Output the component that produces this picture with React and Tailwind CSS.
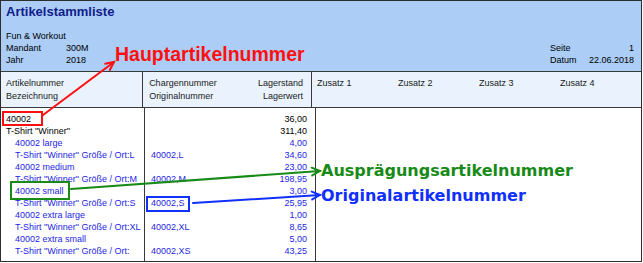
import React from "react";

const rows = [
  { nr: "40002", qty: "36,00", main: true },
  { nr: 'T-Shirt "Winner"', qty: "311,40", main: true },
  { nr: "40002 large", qty: "4,00" },
  { nr: 'T-Shirt "Winner" Größe / Ort:L', orig: "40002,L", qty: "34,60" },
  { nr: "40002 medium", qty: "23,00" },
  { nr: 'T-Shirt "Winner" Größe / Ort:M', orig: "40002,M", qty: "198,95" },
  { nr: "40002 small", qty: "3,00" },
  { nr: 'T-Shirt "Winner" Größe / Ort:S', orig: "40002,S", qty: "25,95" },
  { nr: "40002 extra large", qty: "1,00" },
  { nr: 'T-Shirt "Winner" Größe / Ort:XL', orig: "40002,XL", qty: "8,65" },
  { nr: "40002 extra small", qty: "5,00" },
  { nr: 'T-Shirt "Winner" Größe / Ort:', orig: "40002,XS", qty: "43,25" },
];

// open arrow head at (x2,y2)
const Arrow = ({ x1, y1, x2, y2, color }) => {
  const a = Math.atan2(y2 - y1, x2 - x1);
  const len = 9;
  const s = 0.45;
  const p1 = [x2 - len * Math.cos(a - s), y2 - len * Math.sin(a - s)];
  const p2 = [x2 - len * Math.cos(a + s), y2 - len * Math.sin(a + s)];
  return (
    <g stroke={color} strokeWidth="2" fill="none" strokeLinecap="round">
      <line x1={x1} y1={y1} x2={x2} y2={y2} />
      <polyline points={`${p1[0]},${p1[1]} ${x2},${y2} ${p2[0]},${p2[1]}`} />
    </g>
  );
};

export default function App() {
  return (
    <div
      className="relative w-[643px] h-[263px] bg-white text-[9px] leading-[12px] text-black"
      style={{ fontFamily: '"Liberation Sans", Arial, sans-serif' }}
    >
      <div className="w-[642px] h-[262px] border border-[#2e2e2e] flex flex-col">
        {/* report head */}
        <div className="h-[71px] shrink-0 bg-[#abcdf6] border-b border-[#3a3a3a] pl-[5px] pr-[7px] pt-[3px]">
          <div className="text-[13px] leading-[15px] font-bold text-[#111c8c]">Artikelstammliste</div>
          <div className="mt-[11px] flex justify-between items-end">
            <div>
              <div>Fun &amp; Workout</div>
              <div className="flex">
                <span className="w-[60px]">Mandant</span>
                <span>300M</span>
              </div>
              <div className="flex">
                <span className="w-[60px]">Jahr</span>
                <span>2018</span>
              </div>
            </div>
            <div className="w-[84px]">
              <div className="flex justify-between">
                <span>Seite</span>
                <span>1</span>
              </div>
              <div className="flex justify-between">
                <span>Datum</span>
                <span>22.06.2018</span>
              </div>
            </div>
          </div>
        </div>

        {/* column titles */}
        <div className="h-[36px] shrink-0 flex bg-[#e9f2fd] border-b border-[#3a3a3a] leading-[13px] text-[#1a1a1a]">
          <div className="w-[144px] border-r border-[#3a3a3a] pl-[5px] pt-[5px]">
            <div>Artikelnummer</div>
            <div>Bezeichnung</div>
          </div>
          <div className="w-[171px] border-r border-[#3a3a3a] pl-[6px] pr-[8px] pt-[5px]">
            <div className="flex justify-between">
              <span>Chargennummer</span>
              <span>Lagerstand</span>
            </div>
            <div className="flex justify-between">
              <span>Originalnummer</span>
              <span>Lagerwert</span>
            </div>
          </div>
          <div className="flex-1 pl-[5px] pt-[5px] flex">
            <span className="w-[81px]">Zusatz 1</span>
            <span className="w-[81px]">Zusatz 2</span>
            <span className="w-[81px]">Zusatz 3</span>
            <span className="w-[81px]">Zusatz 4</span>
          </div>
        </div>

        {/* article lines */}
        <div className="flex-1 flex">
          <div className="w-[144px] border-r border-[#3a3a3a] pl-[5px] pt-[4.5px]">
            {rows.map((r, i) => (
              <div key={i} className={r.main ? "" : "pl-[9px] text-[#2525e6]"}>
                {r.nr}
              </div>
            ))}
          </div>
          <div className="w-[171px] border-r border-[#3a3a3a] pl-[6px] pr-[8px] pt-[4.5px]">
            {rows.map((r, i) => (
              <div key={i} className={`flex justify-between ${r.main ? "" : "text-[#2525e6]"}`}>
                <span>{r.orig || ""}</span>
                <span>{r.qty}</span>
              </div>
            ))}
          </div>
          <div className="flex-1" />
        </div>
      </div>

      {/* callouts */}
      <svg className="absolute inset-0 pointer-events-none" width="643" height="263">
        <rect x="3" y="112" width="39" height="13" fill="none" stroke="#ff1010" strokeWidth="2" />
        <Arrow x1={43} y1={115} x2={114} y2={62} color="#ff1010" />
        <rect x="11" y="182" width="58" height="17" fill="none" stroke="#178a17" strokeWidth="2" />
        <Arrow x1={71} y1={189} x2={320} y2={171} color="#178a17" />
        <rect x="147" y="197" width="42" height="14" fill="none" stroke="#1030ff" strokeWidth="2" />
        <Arrow x1={193} y1={203} x2={320} y2={195} color="#1030ff" />
      </svg>
      <div
        className="absolute left-[115px] top-[44px] text-[19.5px] leading-[20px] font-bold text-[#ff1010]"
        style={{ fontFamily: '"Liberation Sans", Arial, sans-serif' }}
      >
        Hauptartikelnummer
      </div>
      <div
        className="absolute left-[321px] top-[163px] text-[16px] leading-[16px] font-bold text-[#178a17]"
        style={{ fontFamily: '"DejaVu Sans", Verdana, sans-serif' }}
      >
        Ausprägungsartikelnummer
      </div>
      <div
        className="absolute left-[321px] top-[188px] text-[16px] leading-[16px] font-bold text-[#1030ff]"
        style={{ fontFamily: '"DejaVu Sans", Verdana, sans-serif' }}
      >
        Originalartikelnummer
      </div>
    </div>
  );
}
